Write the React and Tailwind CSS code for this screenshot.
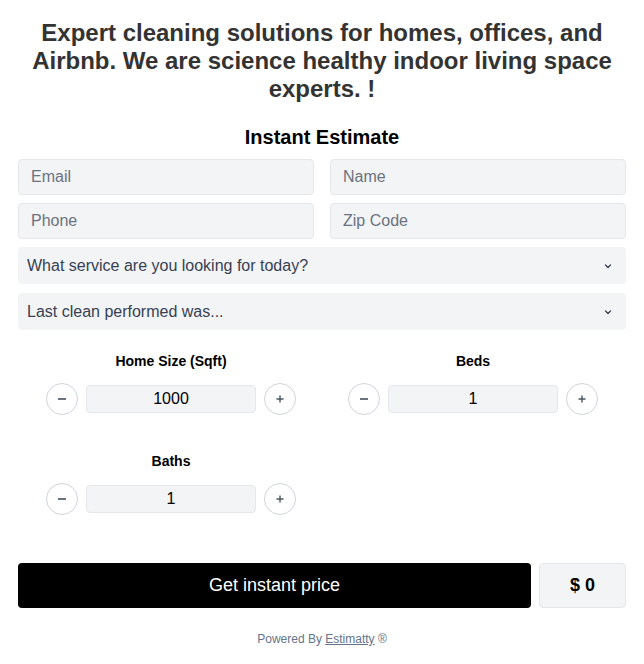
import React, { useState } from 'react'

const inputCls =
  'h-[36px] w-full rounded-[4px] border border-[#e5e7eb] bg-[#f3f4f6] px-[12px] text-[16px] text-[#374151] outline-none placeholder:text-[#6b7280]'

const Chevron = () => (
  <svg width="10" height="10" viewBox="0 0 20 20" fill="none" className="absolute right-[13px] top-1/2 -translate-y-1/2">
    <path d="M5 8l5 5 5-5" stroke="#374151" strokeWidth="2.6" strokeLinecap="round" strokeLinejoin="round" />
  </svg>
)

const Select = ({ label }) => (
  <div className="relative">
    <select className="h-[37px] w-full appearance-none rounded-[4px] bg-[#f3f4f6] pl-[9px] text-[16px] text-[#374151] outline-none">
      <option>{label}</option>
    </select>
    <Chevron />
  </div>
)

const Stepper = ({ label, value, onChange }) => (
  <div className="flex h-[100px] flex-col items-center">
    <div className="mt-[7px] text-[14px] font-bold text-black">{label}</div>
    <div className="mt-[11px] flex items-center gap-[8px]">
      <button
        type="button"
        onClick={() => onChange(Math.max(0, value - 1))}
        className="flex h-[32px] w-[32px] items-center justify-center rounded-full border border-[#d1d5db] bg-white"
      >
        <span className="block h-[2px] w-[8px] bg-[#6b7280]" />
      </button>
      <input
        value={value}
        readOnly
        className="h-[28px] w-[170px] rounded-[4px] border border-[#e5e7eb] bg-[#f3f4f6] text-center text-[16px] text-black outline-none"
      />
      <button
        type="button"
        onClick={() => onChange(value + 1)}
        className="flex h-[32px] w-[32px] items-center justify-center rounded-full border border-[#d1d5db] bg-white"
      >
        <svg width="10" height="10" viewBox="0 0 10 10">
          <path d="M5 1.5v7M1.5 5h7" stroke="#4b5563" strokeWidth="1.4" />
        </svg>
      </button>
    </div>
  </div>
)

export default function App() {
  const [size, setSize] = useState(1000)
  const [beds, setBeds] = useState(1)
  const [baths, setBaths] = useState(1)

  return (
    <div className="min-h-[664px] bg-white font-['Liberation_Sans',Arial,sans-serif]">
      <div className="px-[18px] pt-[19px]">
        <h1 className="text-center text-[24px] font-bold leading-[28px] text-[#333333]">
          Expert cleaning solutions for homes, offices, and Airbnb. We are science healthy indoor living space experts. !
        </h1>
        <h2 className="mt-[22px] text-center text-[20px] font-bold leading-[24px] text-black">Instant Estimate</h2>

        <div className="mt-[10px] grid grid-cols-2 gap-x-[16px] gap-y-[8px]">
          <input className={inputCls} placeholder="Email" />
          <input className={inputCls} placeholder="Name" />
          <input className={inputCls} placeholder="Phone" />
          <input className={inputCls} placeholder="Zip Code" />
        </div>

        <div className="mt-[8px] flex flex-col gap-[9px]">
          <Select label="What service are you looking for today?" />
          <Select label="Last clean performed was..." />
        </div>

        <div className="mt-[14px] grid grid-cols-2 px-[2px]">
          <Stepper label="Home Size (Sqft)" value={size} onChange={setSize} />
          <Stepper label="Beds" value={beds} onChange={setBeds} />
          <Stepper label="Baths" value={baths} onChange={setBaths} />
        </div>

        <div className="mt-[19px] flex gap-[8px]">
          <button type="button" className="h-[45px] flex-1 rounded-[4px] bg-black text-[18px] text-white">
            Get instant price
          </button>
          <div className="flex h-[45px] w-[87px] items-center justify-center rounded-[4px] border border-[#e5e7eb] bg-[#f3f4f6] text-[18px] font-bold text-black">
            $ 0
          </div>
        </div>

        <div className="mt-[22px] text-center text-[12px] text-[#64748b]">
          Powered By <span className="underline">Estimatty</span> ®
        </div>
      </div>
    </div>
  )
}
